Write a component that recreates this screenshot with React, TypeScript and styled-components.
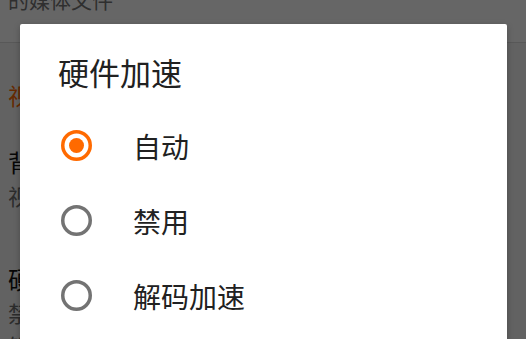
import React from 'react'
import styled, { createGlobalStyle } from 'styled-components'

const FONT = '"Noto Sans CJK SC", "Noto Sans", sans-serif'
const ACCENT = '#ff6a00'

const GlobalStyle = createGlobalStyle`
  html, body {
    margin: 0;
    padding: 0;
    background: #ffffff;
  }
  body {
    font-family: ${FONT};
  }
`

const Screen = styled.div`
  position: relative;
  width: 526px;
  height: 339px;
  overflow: hidden;
  background: #ffffff;
`

/* settings list that sits behind the dialog */
const SettingsList = styled.div`
  display: flex;
  flex-direction: column;
  height: 100%;
`

const TopBlock = styled.div`
  flex: none;
  height: 42px;
  padding: 0 8px;
  background: #ffffff;
`

const SummaryTail = styled.div`
  margin-top: -15px;
  font-size: 21px;
  line-height: 28px;
  color: #757575;
  white-space: nowrap;
`

const Divider = styled.div`
  flex: none;
  height: 1px;
  background: #dcdcdc;
`

const ListBody = styled.div`
  flex: 1;
  padding: 37px 8px 0;
  background: #f4f4f4;
`

const Category = styled.div`
  font-size: 23px;
  line-height: 30px;
  color: ${ACCENT};
  white-space: nowrap;
`

const Pref = styled.div<{ $gap: number }>`
  margin-top: ${({ $gap }) => $gap}px;
  display: flex;
  flex-direction: column;
  gap: 3px;
`

const PrefTitle = styled.div`
  font-size: 24px;
  line-height: 30px;
  color: #111111;
  white-space: nowrap;
`

const PrefSummary = styled.div`
  font-size: 22px;
  line-height: 30px;
  color: #6f6f6f;
  white-space: nowrap;
`

const Scrim = styled.div`
  position: absolute;
  inset: 0;
  background: rgba(0, 0, 0, 0.6);
`

const Dialog = styled.div`
  position: absolute;
  left: 20px;
  top: 24px;
  width: 487px;
  height: 360px;
  box-sizing: border-box;
  padding: 30px 0 0 38px;
  background: #ffffff;
  border-radius: 2px;
  box-shadow: 0 2px 6px rgba(0, 0, 0, 0.25);
`

const DialogTitle = styled.div`
  font-size: 31px;
  line-height: 36px;
  color: #212121;
`

const Options = styled.div`
  margin-top: 18px;
  display: flex;
  flex-direction: column;
`

const OptionRow = styled.div`
  height: 75px;
  display: flex;
  align-items: center;
  gap: 41px;
  padding-left: 3px;
`

const OptionLabel = styled.span`
  font-size: 28px;
  line-height: 34px;
  color: #212121;
`

const RadioSvg = styled.svg`
  flex: none;
  width: 31px;
  height: 31px;
`

const Radio = ({ checked }: { checked: boolean }) => (
  <RadioSvg viewBox="0 0 31 31">
    <circle
      cx="15.5"
      cy="15.5"
      r="13.75"
      fill="none"
      stroke={checked ? ACCENT : '#737373'}
      strokeWidth="3.5"
    />
    {checked && <circle cx="15.5" cy="15.5" r="7.5" fill={ACCENT} />}
  </RadioSvg>
)

const options = ['自动', '禁用', '解码加速']

export default function App() {
  const selected = 0

  return (
    <>
      <GlobalStyle />
      <Screen>
        <SettingsList>
          <TopBlock>
            <SummaryTail>的媒体文件</SummaryTail>
          </TopBlock>
          <Divider />
          <ListBody>
            <Category>视频</Category>
            <Pref $gap={37}>
              <PrefTitle>背景播放</PrefTitle>
              <PrefSummary>视频在后台时继续播放声音</PrefSummary>
            </Pref>
            <Pref $gap={54}>
              <PrefTitle>硬件加速</PrefTitle>
              <PrefSummary>禁用：使用软件解码</PrefSummary>
              <PrefSummary>解码加速：使用硬件解码</PrefSummary>
            </Pref>
          </ListBody>
        </SettingsList>

        <Scrim />

        <Dialog>
          <DialogTitle>硬件加速</DialogTitle>
          <Options>
            {options.map((label, i) => (
              <OptionRow key={label}>
                <Radio checked={i === selected} />
                <OptionLabel>{label}</OptionLabel>
              </OptionRow>
            ))}
          </Options>
        </Dialog>
      </Screen>
    </>
  )
}
